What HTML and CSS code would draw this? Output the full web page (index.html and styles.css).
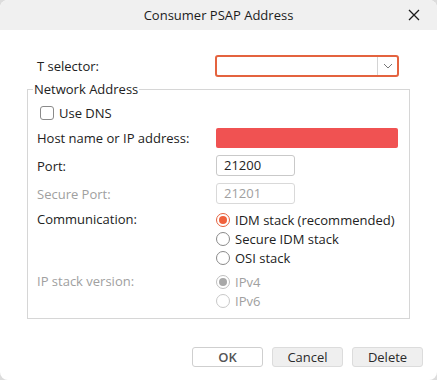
FILE: index.html
```html
<!DOCTYPE html>
<html>
<head>
<meta charset="utf-8">
<link rel="stylesheet" href="styles.css">
</head>
<body>
<div class="window">
  <div class="titlebar">
    <div class="title">Consumer PSAP Address</div>
    <div class="close">
      <svg width="12" height="12" viewBox="0 0 12 12"><path d="M1 1 L11 11 M11 1 L1 11" stroke="#1a1a1a" stroke-width="1.3" fill="none"/></svg>
    </div>
  </div>
  <div class="content">
    <div class="tsel-row">
      <div class="label">T selector:</div>
      <div class="combo">
        <div class="combo-field"></div>
        <div class="combo-btn">
          <svg width="10" height="6" viewBox="0 0 10 6"><path d="M1 1 L5 5 L9 1" stroke="#777" stroke-width="1" fill="none"/></svg>
        </div>
      </div>
    </div>
    <div class="group">
      <div class="legend">Network Address</div>
      <div class="dns-row">
        <span class="checkbox"></span><span>Use DNS</span>
      </div>
      <div class="row host-row">
        <div class="label">Host name or IP address:</div>
        <div class="field-error"></div>
      </div>
      <div class="row port-row">
        <div class="label">Port:</div>
        <div class="field">21200</div>
      </div>
      <div class="row port-row">
        <div class="label disabled">Secure Port:</div>
        <div class="field disabled">21201</div>
      </div>
      <div class="radio-block comm">
        <div class="label">Communication:</div>
        <div class="radios">
          <div class="radio-item"><span class="radio checked"></span><span>IDM stack (recommended)</span></div>
          <div class="radio-item"><span class="radio"></span><span>Secure IDM stack</span></div>
          <div class="radio-item"><span class="radio"></span><span>OSI stack</span></div>
        </div>
      </div>
      <div class="radio-block ipstack">
        <div class="label disabled">IP stack version:</div>
        <div class="radios disabled">
          <div class="radio-item"><span class="radio checked-dis"></span><span>IPv4</span></div>
          <div class="radio-item"><span class="radio dis"></span><span>IPv6</span></div>
        </div>
      </div>
    </div>
    <div class="buttons">
      <div class="btn btn-ok">OK</div>
      <div class="btn">Cancel</div>
      <div class="btn">Delete</div>
    </div>
  </div>
</div>
</body>
</html>
```

FILE: styles.css
```css
html, body {
  margin: 0;
  padding: 0;
  background: #dcdcdc;
}
body {
  font-family: "Open Sans", "Liberation Sans", sans-serif;
  font-size: 13px;
  color: #222;
}
.window {
  width: 437px;
  height: 380px;
  background: #ffffff;
  border-radius: 8px;
  overflow: hidden;
  box-sizing: border-box;
}
.titlebar {
  height: 30px;
  background: #f0f0f0;
  display: flex;
  align-items: center;
  justify-content: center;
  position: relative;
}
.title {
  font-size: 13px;
  color: #1c1c1c;
  line-height: 30px;
}
.close {
  position: absolute;
  right: 17px;
  top: 9px;
  width: 12px;
  height: 12px;
  display: flex;
}
.content {
  padding: 25px 14px 0 27px;
}
.tsel-row {
  display: flex;
  align-items: center;
  height: 22px;
  padding-left: 10px;
}
.tsel-row .label {
  width: 178px;
}
.combo {
  width: 184px;
  height: 22px;
  box-sizing: border-box;
  border: 2px solid #e4633f;
  border-radius: 3px;
  display: flex;
}
.combo-field {
  flex: 1;
}
.combo-btn {
  width: 19px;
  border-left: 1px solid #d4d4d4;
  display: flex;
  align-items: center;
  justify-content: center;
}
.group {
  margin-top: 12px;
  width: 383px;
  height: 230px;
  box-sizing: border-box;
  border: 1px solid #d6d6d6;
  padding: 0 0 0 9px;
}
.legend {
  display: table;
  margin-top: -9px;
  margin-left: -4px;
  padding: 0 1px;
  background: #fff;
  line-height: 16px;
}
.dns-row {
  display: flex;
  align-items: center;
  height: 20px;
  margin-top: 6px;
  padding-left: 3px;
  gap: 5px;
}
.checkbox {
  width: 12px;
  height: 12px;
  border: 1px solid #8a8a8a;
  border-radius: 3px;
  background: #fff;
}
.row {
  display: flex;
  align-items: center;
}
.row .label, .radio-block .label {
  width: 179px;
}
.host-row {
  margin-top: 5px;
  height: 20px;
}
.field-error {
  width: 182px;
  height: 20px;
  background: #f05252;
  border-radius: 2px;
}
.port-row {
  margin-top: 7px;
  height: 21px;
}
.field {
  width: 79px;
  height: 21px;
  box-sizing: border-box;
  border: 1px solid #c9c9c9;
  border-radius: 3px;
  padding-left: 7px;
  line-height: 19px;
  color: #222;
}
.disabled {
  color: #a0a0a0;
}
.field.disabled {
  border-color: #d9d9d9;
}
.radio-block {
  display: flex;
}
.radio-block .label {
  height: 19px;
  line-height: 19px;
}
.comm {
  margin-top: 6px;
}
.ipstack {
  margin-top: 5px;
}
.radios {
  display: flex;
  flex-direction: column;
}
.radio-item {
  display: flex;
  align-items: center;
  height: 19px;
  gap: 5px;
}
.radio {
  width: 14px;
  height: 14px;
  box-sizing: border-box;
  border: 1px solid #8a8a8a;
  border-radius: 50%;
  background: #fff;
  display: flex;
  align-items: center;
  justify-content: center;
}
.radio.checked {
  border-color: #e4633f;
}
.radio.checked::after {
  content: "";
  width: 8px;
  height: 8px;
  border-radius: 50%;
  background: #f0613c;
}
.radio.dis {
  border-color: #c8c8c8;
}
.radio.checked-dis {
  border-color: #c0c0c0;
}
.radio.checked-dis::after {
  content: "";
  width: 8px;
  height: 8px;
  border-radius: 50%;
  background: #a8a8a8;
}
.buttons {
  display: flex;
  justify-content: flex-end;
  gap: 9px;
  margin-top: 28px;
}
.btn {
  width: 71px;
  height: 20px;
  box-sizing: border-box;
  border: 1px solid #dcdcdc;
  border-radius: 3px;
  background: #efefef;
  text-align: center;
  line-height: 18px;
  color: #2a2a2a;
}
.btn-ok {
  background: #fff;
  border-color: #cfcfcf;
  font-weight: 600;
  color: #555;
}
```
